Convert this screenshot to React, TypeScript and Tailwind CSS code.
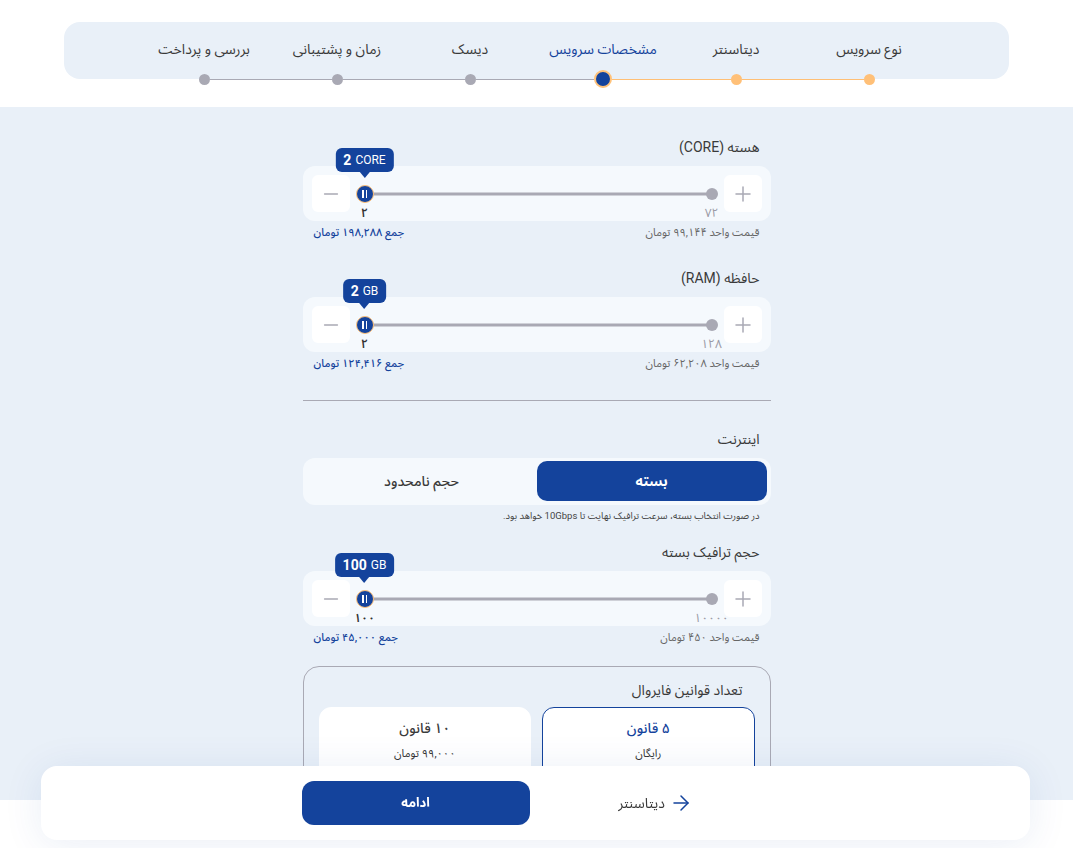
import React from 'react';
import { ArrowRight, Minus, Plus } from 'lucide-react';

const STEPS = ['نوع سرویس', 'دیتاسنتر', 'مشخصات سرویس', 'دیسک', 'زمان و پشتیبانی', 'بررسی و پرداخت'];
const ACTIVE = 2;

const Stepper = () => (
  <div className="mx-16 h-[57px] rounded-2xl bg-[#e9f0f8] flex justify-center">
    <div className="w-[798px] grid grid-cols-6">
      {STEPS.map((s, i) => {
        const done = i < ACTIVE;
        const active = i === ACTIVE;
        return (
          <div key={s} className="flex flex-col items-center">
            <div
              className={`pt-[17px] text-[14px] leading-5 ${
                active ? 'text-[#14439c]' : 'text-[#3a3a3a]'
              }`}
            >
              {s}
            </div>
            <div className="mt-[11px] flex items-center w-full h-[18px]">
              <div className={`flex-1 h-px ${i === 0 ? '' : i <= ACTIVE ? 'bg-[#ffbf75]' : 'bg-[#a9a9b4]'}`} />
              {active ? (
                <span className="w-[18px] h-[18px] rounded-full bg-[#14439c] border-2 border-[#ffc27a]" />
              ) : (
                <span className={`w-[11px] h-[11px] rounded-full ${done ? 'bg-[#ffc078]' : 'bg-[#a9a9b4]'}`} />
              )}
              <div className={`flex-1 h-px ${i === STEPS.length - 1 ? '' : i < ACTIVE ? 'bg-[#ffbf75]' : 'bg-[#a9a9b4]'}`} />
            </div>
          </div>
        );
      })}
    </div>
  </div>
);

interface RangeProps {
  label: string;
  value: string;
  unit: string;
  min: string;
  max: string;
  unitPrice: string;
  total: string;
  top?: string;
}

const RangeField: React.FC<RangeProps> = ({ label, value, unit, min, max, unitPrice, total, top = 'mt-0' }) => (
  <div className={top}>
    <div className="h-5 leading-5 text-[14px] text-[#3a3a3a] pr-[11px] mb-[9px]">{label}</div>
    <div dir="ltr" className="h-[55px] rounded-xl bg-[#f5f9fd] flex items-center px-[9px]">
      <button className="w-[38px] h-[37px] rounded-md bg-white flex items-center justify-center text-[#a9a9b4]">
        <Minus size={22} strokeWidth={1.5} />
      </button>
      <div className="relative flex-1 h-full">
        <div className="absolute left-[15px] right-[12px] top-1/2 -translate-y-1/2 h-[3px] bg-[#a9a9b4] rounded-full" />
        <span className="absolute right-[6px] top-1/2 -translate-y-1/2 w-[12px] h-[12px] rounded-full bg-[#a9a9b4]" />
        <div className="absolute left-[6px] top-1/2 -translate-y-1/2 w-[18px] h-[18px] rounded-full bg-[#14439c] border-[1.5px] border-[#ffc27a] flex items-center justify-center gap-[2px]">
          <span className="w-[1.5px] h-[8px] bg-white" />
          <span className="w-[1.5px] h-[8px] bg-white" />
        </div>
        <div className="absolute left-[15px] -translate-x-1/2 -top-[18px] flex flex-col items-center">
          <div className="h-6 px-2 rounded-md bg-[#14439c] text-white flex items-center gap-1 whitespace-nowrap">
            <span className="text-[14px] font-bold">{value}</span>
            <span className="text-[12px]">{unit}</span>
          </div>
          <span className="w-0 h-0 border-x-[5px] border-x-transparent border-t-[6px] border-t-[#14439c]" />
        </div>
        <span className="absolute left-[15px] -translate-x-1/2 bottom-0 text-[12px] leading-4 font-semibold text-[#333]">{min}</span>
        <span className="absolute right-[12px] translate-x-1/2 bottom-0 text-[12px] leading-4 text-[#9b9ba6]">{max}</span>
      </div>
      <button className="w-[38px] h-[37px] rounded-md bg-white flex items-center justify-center text-[#a9a9b4]">
        <Plus size={24} strokeWidth={1.5} />
      </button>
    </div>
    <div className="mt-1 h-4 flex justify-between items-center px-[11px] text-[11px]">
      <span className="text-[#666]">{unitPrice}</span>
      <span className="text-[#14439c] font-medium">{total}</span>
    </div>
  </div>
);

export default function App() {
  return (
    <div
      dir="rtl"
      className="min-h-screen bg-white pt-[22px]"
      style={{ fontFamily: "Roboto, 'Noto Sans Arabic', 'DejaVu Sans', sans-serif" }}
    >
      <Stepper />

      <main className="mt-[28px] h-[693px] overflow-hidden bg-[#e9f0f8]">
        <div className="w-[468px] mx-auto pt-[30px]">
          <RangeField
            label="هسته (CORE)"
            value="2"
            unit="CORE"
            min="۲"
            max="۷۲"
            unitPrice="قیمت واحد ۹۹,۱۴۴ تومان"
            total="جمع ۱۹۸,۲۸۸ تومان"
          />
          <RangeField
            top="mt-[27px]"
            label="حافظه (RAM)"
            value="2"
            unit="GB"
            min="۲"
            max="۱۲۸"
            unitPrice="قیمت واحد ۶۲,۲۰۸ تومان"
            total="جمع ۱۲۴,۴۱۶ تومان"
          />

          <div className="mt-[28px] h-px bg-[#a9a9b4]" />

          <div className="mt-[28px] h-5 leading-5 text-[14px] text-[#3a3a3a] pr-[11px] mb-[9px]">اینترنت</div>
          <div className="h-[47px] rounded-xl bg-[#f5f9fd] grid grid-cols-2 p-[4px] pt-[3px]">
            <button className="rounded-[10px] bg-[#14439c] text-white text-[14px] font-bold">بسته</button>
            <button className="text-[#3a3a3a] text-[14px] font-medium">حجم نامحدود</button>
          </div>
          <div className="mt-1 h-[14px] leading-[14px] pr-[11px] text-[9.5px] text-[#444]">
            در صورت انتخاب بسته، سرعت ترافیک نهایت تا 10Gbps خواهد بود.
          </div>

          <RangeField
            top="mt-[19px]"
            label="حجم ترافیک بسته"
            value="100"
            unit="GB"
            min="۱۰۰"
            max="۱۰۰۰۰"
            unitPrice="قیمت واحد ۴۵۰ تومان"
            total="جمع ۴۵,۰۰۰ تومان"
          />

          <div className="mt-5 rounded-2xl border border-[#a9a9b4] px-[15px] pt-[13px] pb-4">
            <div className="h-5 leading-5 text-[14px] text-[#3a3a3a] pr-3 mb-[7px]">تعداد قوانین فایروال</div>
            <div className="grid grid-cols-2 gap-[11px]">
              <div className="h-[72px] rounded-xl bg-white border border-[#14439c] flex flex-col items-center pt-[10px]">
                <span className="text-[14px] font-medium text-[#14439c] leading-5">۵ قانون</span>
                <span className="mt-2 text-[11px] text-[#333]">رایگان</span>
              </div>
              <div className="h-[72px] rounded-xl bg-white border border-white flex flex-col items-center pt-[10px]">
                <span className="text-[14px] font-medium text-[#3a3a3a] leading-5">۱۰ قانون</span>
                <span className="mt-2 text-[11px] text-[#333]">۹۹,۰۰۰ تومان</span>
              </div>
            </div>
          </div>
        </div>
      </main>

      <div className="fixed left-[41px] right-[43px] bottom-2 h-[74px] rounded-2xl bg-white shadow-[0_4px_40px_rgba(20,67,156,0.09)] flex items-center justify-center">
        <div className="w-[468px] grid grid-cols-2 gap-3 items-center">
          <button className="flex items-center justify-center gap-1 text-[14px] text-[#3a3a3a]">
            <ArrowRight size={24} strokeWidth={1.5} className="text-[#14439c]" />
            <span>دیتاسنتر</span>
          </button>
          <button className="h-11 rounded-xl bg-[#14439c] text-white text-[13px] font-bold">ادامه</button>
        </div>
      </div>
    </div>
  );
}
